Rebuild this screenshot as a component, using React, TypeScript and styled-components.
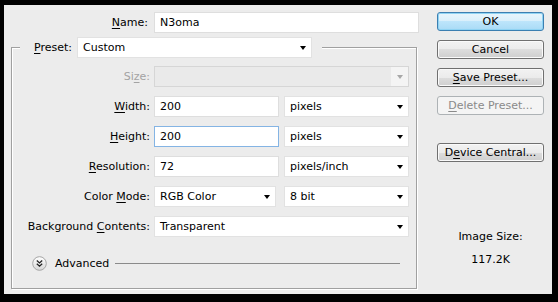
import React from "react";
import styled, { createGlobalStyle } from "styled-components";

const GlobalStyle = createGlobalStyle`
  html, body { margin: 0; padding: 0; background: #000; }
  body {
    font-family: "DejaVu Sans", Verdana, sans-serif;
    font-size: 11px;
    color: #000;
  }
  * { box-sizing: border-box; }
`;

const Frame = styled.div`
  width: 558px;
  height: 302px;
  background: #000;
  padding: 5px 6px 8px 4px;
`;

const Dialog = styled.div`
  width: 100%;
  height: 100%;
  background: #ececec;
  display: flex;
  padding: 7px 8px 0 7px;
  gap: 18px;
`;

const LeftColumn = styled.div`
  width: 408px;
  flex-shrink: 0;
  display: flex;
  flex-direction: column;
`;

const FieldRow = styled.div`
  display: flex;
  align-items: center;
  height: 21px;
  & > * { flex-shrink: 0; }
`;

const Label = styled.label<{ $width?: number; $gap?: number; $disabled?: boolean }>`
  ${(p) => (p.$width ? `width: ${p.$width}px; text-align: right;` : "")}
  flex-shrink: 0;
  margin-right: ${(p) => p.$gap ?? 5}px;
  color: ${(p) => (p.$disabled ? "#a3a3a3" : "#000")};
  white-space: nowrap;
  line-height: 21px;
`;

const Key = styled.span`
  text-decoration: underline;
  text-underline-offset: 2px;
`;

const TextInput = styled.div<{ $width: number; $focused?: boolean; $gap?: number }>`
  width: ${(p) => p.$width}px;
  height: 21px;
  flex-shrink: 0;
  background: #fff;
  border: 1px solid ${(p) => (p.$focused ? "#84b4e4" : "#dedede")};
  padding: 0 5px;
  display: flex;
  align-items: center;
  margin-right: ${(p) => p.$gap ?? 0}px;
`;

const SelectBox = styled.div<{ $width: number; $disabled?: boolean; $gap?: number }>`
  width: ${(p) => p.$width}px;
  height: 21px;
  flex-shrink: 0;
  background: ${(p) => (p.$disabled ? "#eaeaea" : "#fff")};
  border: 1px solid ${(p) => (p.$disabled ? "#d6d6d6" : "#e2e2e2")};
  display: flex;
  align-items: stretch;
  margin-right: ${(p) => p.$gap ?? 0}px;
`;

const SelectText = styled.span`
  flex: 1;
  padding-left: 5px;
  display: flex;
  align-items: center;
  white-space: nowrap;
`;

const ArrowCell = styled.span<{ $disabled?: boolean }>`
  width: 17px;
  display: flex;
  align-items: center;
  justify-content: center;
  background: ${(p) => (p.$disabled ? "#f4f4f4" : "transparent")};
  &::before {
    content: "";
    display: block;
    margin-top: 1px;
    border-left: 3.5px solid transparent;
    border-right: 3.5px solid transparent;
    border-top: 4px solid ${(p) => (p.$disabled ? "#a8a8a8" : "#000")};
  }
`;

const GroupBox = styled.fieldset`
  margin: 4px 0 5px 0;
  width: 406px;
  flex: 1;
  min-width: 0;
  border: 1px solid #a0a0a0;
  box-shadow: inset 1px 1px 0 #fff, 1px 1px 0 #fff;
  padding: 8px 0 0 0;
  display: flex;
  flex-direction: column;
  gap: 9px;
`;

const Legend = styled.legend`
  margin-left: 8px;
  padding: 0 10px 0 14px;
  height: 21px;
  display: flex;
  align-items: center;
  background: #ececec;
`;

const AdvancedRow = styled.div`
  display: flex;
  align-items: center;
  height: 15px;
  margin-top: 10px;
  padding-left: 20px;
  padding-right: 16px;
`;

const AdvancedText = styled.span`
  margin: 0 6px 0 8px;
  line-height: 15px;
`;

const Rule = styled.span`
  flex: 1;
  height: 1px;
  background: #8a8a8a;
  margin-top: -1px;
`;

const RightColumn = styled.div`
  width: 107px;
  flex-shrink: 0;
  display: flex;
  flex-direction: column;
  gap: 9px;
`;

const Button = styled.button<{ $kind?: "default" | "normal" | "disabled"; $offset?: number }>`
  width: 107px;
  height: 19px;
  padding: 0;
  margin: ${(p) => p.$offset ?? 0}px 0 0 0;
  font: inherit;
  line-height: 17px;
  border-radius: 3px;
  text-align: center;
  white-space: nowrap;
  border: 1px solid
    ${(p) => (p.$kind === "default" ? "#3c7fb1" : p.$kind === "disabled" ? "#adb2b5" : "#707070")};
  color: ${(p) => (p.$kind === "disabled" ? "#8a8a8a" : "#000")};
  background: ${(p) =>
    p.$kind === "default"
      ? "linear-gradient(#e8f5fc 0%, #d8effb 50%, #bde5fb 50%, #a9dbf6 100%)"
      : p.$kind === "disabled"
      ? "#f4f4f4"
      : "linear-gradient(#f2f2f2 0%, #ebebeb 50%, #dddddd 50%, #cfcfcf 100%)"};
  box-shadow: ${(p) =>
    p.$kind === "default"
      ? "inset 0 0 0 1px #8fd3f3"
      : p.$kind === "disabled"
      ? "none"
      : "inset 0 0 0 1px #fafafa"};
`;

const InfoText = styled.div<{ $offset?: number }>`
  text-align: center;
  line-height: 14px;
  margin-top: ${(p) => p.$offset ?? 0}px;
`;

const AdvancedIcon = () => (
  <svg width="15" height="15" viewBox="0 0 15 15" style={{ flexShrink: 0 }}>
    <defs>
      <linearGradient id="advg" x1="0" y1="0" x2="0" y2="1">
        <stop offset="0" stopColor="#ffffff" />
        <stop offset="1" stopColor="#d6d6d6" />
      </linearGradient>
    </defs>
    <circle cx="7.5" cy="7.5" r="6.8" fill="url(#advg)" stroke="#a4a4a4" strokeWidth="1" />
    <path
      d="M4.8 4.6 L7.5 7 L10.2 4.6 M4.8 7.8 L7.5 10.2 L10.2 7.8"
      fill="none"
      stroke="#222"
      strokeWidth="1.3"
    />
  </svg>
);

const Select = ({
  width,
  value,
  disabled,
  gap,
}: {
  width: number;
  value?: string;
  disabled?: boolean;
  gap?: number;
}) => (
  <SelectBox $width={width} $disabled={disabled} $gap={gap}>
    <SelectText>{value}</SelectText>
    <ArrowCell $disabled={disabled} />
  </SelectBox>
);

export default function App() {
  return (
    <>
      <GlobalStyle />
      <Frame>
        <Dialog>
          <LeftColumn>
            <FieldRow>
              <Label $width={137} $gap={6}>
                <Key>N</Key>ame:
              </Label>
              <TextInput $width={265}>N3oma</TextInput>
            </FieldRow>
            <GroupBox>
              <Legend>
                <Label $gap={5}>
                  <Key>P</Key>reset:
                </Label>
                <Select width={235} value="Custom" />
              </Legend>
              <FieldRow>
                <Label $width={138} $gap={4} $disabled>
                  Si<Key>z</Key>e:
                </Label>
                <Select width={255} disabled />
              </FieldRow>
              <FieldRow>
                <Label $width={138} $gap={4}>
                  <Key>W</Key>idth:
                </Label>
                <TextInput $width={125} $gap={5}>200</TextInput>
                <Select width={125} value="pixels" />
              </FieldRow>
              <FieldRow>
                <Label $width={138} $gap={4}>
                  <Key>H</Key>eight:
                </Label>
                <TextInput $width={125} $gap={5} $focused>
                  200
                </TextInput>
                <Select width={125} value="pixels" />
              </FieldRow>
              <FieldRow>
                <Label $width={138} $gap={4}>
                  <Key>R</Key>esolution:
                </Label>
                <TextInput $width={125} $gap={5}>72</TextInput>
                <Select width={125} value="pixels/inch" />
              </FieldRow>
              <FieldRow>
                <Label $width={138} $gap={4}>
                  Color <Key>M</Key>ode:
                </Label>
                <Select width={122} value="RGB Color" gap={8} />
                <Select width={125} value="8 bit" />
              </FieldRow>
              <FieldRow>
                <Label $width={138} $gap={4}>
                  Background <Key>C</Key>ontents:
                </Label>
                <Select width={255} value="Transparent" />
              </FieldRow>
              <AdvancedRow>
                <AdvancedIcon />
                <AdvancedText>Advanced</AdvancedText>
                <Rule />
              </AdvancedRow>
            </GroupBox>
          </LeftColumn>
          <RightColumn>
            <Button $kind="default">OK</Button>
            <Button>Cancel</Button>
            <Button>
              <Key>S</Key>ave Preset...
            </Button>
            <Button $kind="disabled">
              <Key>D</Key>elete Preset...
            </Button>
            <Button $offset={19}>
              D<Key>e</Key>vice Central...
            </Button>
            <InfoText $offset={59}>Image Size:</InfoText>
            <InfoText>117.2K</InfoText>
          </RightColumn>
        </Dialog>
      </Frame>
    </>
  );
}
